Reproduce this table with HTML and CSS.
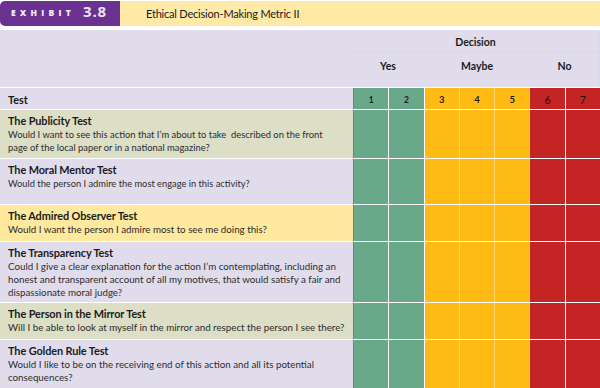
FILE: index.html
```html
<!DOCTYPE html>
<html lang="en">
<head>
<meta charset="utf-8">
<title>Exhibit 3.8</title>
<link rel="stylesheet" href="styles.css">
</head>
<body>
<div class="page">
  <header class="exhibit">
    <div class="badge"><span class="badge-word">EXHIBIT</span><span class="badge-num">3.8</span></div>
    <div class="exhibit-title">Ethical Decision-Making Metric II</div>
  </header>

  <div class="thead">
    <div class="thead-left"></div>
    <div class="thead-right">
      <div class="decision">Decision</div>
      <div class="choices">
        <div class="choice yes">Yes</div>
        <div class="choice maybe">Maybe</div>
        <div class="choice no">No</div>
      </div>
    </div>
  </div>

  <div class="row row-test">
    <div class="label lav"><div class="test-head">Test</div></div>
    <div class="cell g first"><span class="n small">1</span></div>
    <div class="cell g"><span class="n small">2</span></div>
    <div class="cell y"><span class="n">3</span></div>
    <div class="cell y"><span class="n">4</span></div>
    <div class="cell y"><span class="n">5</span></div>
    <div class="cell r"><span class="n big">6</span></div>
    <div class="cell r"><span class="n big">7</span></div>
  </div>

  <div class="row row-pub">
    <div class="label beige">
      <div class="t">The Publicity Test</div>
      <div class="d pub">Would I want to see this action that I’m about to take &nbsp;described on the front<br>page of the local paper or in a national magazine?</div>
    </div>
    <div class="cell g first"></div><div class="cell g"></div><div class="cell y"></div><div class="cell y"></div><div class="cell y"></div><div class="cell r"></div><div class="cell r"></div>
  </div>

  <div class="row row-moral">
    <div class="label lav">
      <div class="t">The Moral Mentor Test</div>
      <div class="d narrow">Would the person I admire the most engage in this activity?</div>
    </div>
    <div class="cell g first"></div><div class="cell g"></div><div class="cell y"></div><div class="cell y"></div><div class="cell y"></div><div class="cell r"></div><div class="cell r"></div>
  </div>

  <div class="row row-admired">
    <div class="label yel">
      <div class="t">The Admired Observer Test</div>
      <div class="d">Would I want the person I admire most to see me doing this?</div>
    </div>
    <div class="cell g first"></div><div class="cell g"></div><div class="cell y"></div><div class="cell y"></div><div class="cell y"></div><div class="cell r"></div><div class="cell r"></div>
  </div>

  <div class="row row-transp">
    <div class="label lav">
      <div class="t">The Transparency Test</div>
      <div class="d">Could I give a clear explanation for the action I’m contemplating, including an<br>honest and transparent account of all my motives, that would satisfy a fair and<br>dispassionate moral judge?</div>
    </div>
    <div class="cell g first"></div><div class="cell g"></div><div class="cell y"></div><div class="cell y"></div><div class="cell y"></div><div class="cell r"></div><div class="cell r"></div>
  </div>

  <div class="row row-mirror">
    <div class="label beige">
      <div class="t">The Person in the Mirror Test</div>
      <div class="d">Will I be able to look at myself in the mirror and respect the person I see there?</div>
    </div>
    <div class="cell g first"></div><div class="cell g"></div><div class="cell y"></div><div class="cell y"></div><div class="cell y"></div><div class="cell r"></div><div class="cell r"></div>
  </div>

  <div class="row row-golden">
    <div class="label lav">
      <div class="t">The Golden Rule Test</div>
      <div class="d">Would I like to be on the receiving end of this action and all its potential<br>consequences?</div>
    </div>
    <div class="cell g first"></div><div class="cell g"></div><div class="cell y"></div><div class="cell y"></div><div class="cell y"></div><div class="cell r"></div><div class="cell r"></div>
  </div>
</div>
</body>
</html>
```

FILE: styles.css
```css
* { box-sizing: border-box; }
html, body { margin: 0; padding: 0; background: #ffffff; }
body {
  width: 600px;
  height: 388px;
  overflow: hidden;
  font-family: Lato, "Open Sans", "Liberation Sans", sans-serif;
  color: #1b1b1b;
}
.page { width: 600px; }

/* exhibit header */
.exhibit {
  display: flex;
  height: 25px;
  margin-top: 1px;
}
.badge {
  width: 120px;
  background: #6a3190;
  border-radius: 5px 0 0 5px;
  display: flex;
  align-items: center;
  padding-left: 11px;
  padding-bottom: 2px;
}
.badge-word {
  font-family: "Open Sans", "Liberation Sans", sans-serif;
  font-weight: 800;
  font-size: 8.5px;
  letter-spacing: 4.3px;
  color: #f3ecfb;
}
.badge-num {
  font-family: "Open Sans", "Liberation Sans", sans-serif;
  font-weight: 700;
  font-size: 15px;
  letter-spacing: 0.8px;
  color: #ebe0f5;
  margin-left: 8px;
  margin-top: -3px;
}
.exhibit-title {
  flex: 1;
  background: #fee9a6;
  font-size: 11px;
  padding-left: 26px;
  display: flex;
  align-items: center;
  padding-bottom: 1px;
  letter-spacing: -0.2px;
}

/* table head */
.thead {
  margin-top: 4px;
  height: 57px;
  display: flex;
  background: #e1dcec;
  border-right: 1px solid #c3e2ee;
}
.thead-left { width: 352px; }
.thead-right {
  flex: 1;
  display: flex;
  flex-direction: column;
}
.decision {
  height: 22px;
  border-bottom: 1px solid #c3e2ee;
  text-align: center;
  font-weight: 700;
  font-size: 10.5px;
  padding-top: 6px;
}
.choices {
  flex: 1;
  display: flex;
  align-items: center;
  font-weight: 700;
  font-size: 10.5px;
  padding-bottom: 8px;
}
.choice { text-align: center; }
.choice.yes { width: 72px; }
.choice.maybe { width: 106px; }
.choice.no { flex: 1; }

/* rows */
.row {
  display: grid;
  grid-template-columns: 353px repeat(7, 1fr);
  border-top: 1px solid #ffffff;
}
.row-test { height: 22px; }
.row-pub { height: 49px; }
.row-moral { height: 46px; }
.row-admired { height: 37px; }
.row-transp { height: 61px; }
.row-mirror { height: 37px; }
.row-golden { height: 60px; }

.label { padding: 4px 8px 0 8px; }
.row-test .label { padding-top: 3px; }
.lav { background: #e1dcec; }
.beige { background: #dddec6; }
.yel { background: #fee99f; }

.test-head { font-weight: 700; font-size: 10.8px; line-height: 14px; padding-top: 2px; }
.t { font-weight: 700; font-size: 10.9px; line-height: 14px; letter-spacing: -0.1px; }
.d { font-size: 9.75px; line-height: 13px; color: #2c2c2c; white-space: nowrap; }
.d.pub { font-size: 9.4px; }
.d.narrow { font-size: 9.3px; }

.cell {
  border-left: 1px solid #ffffff;
  display: flex;
  justify-content: center;
  align-items: center;
}
.cell.first { border-left: 1px solid #4f9474; }
.cell.g { background: #6aa88a; }
.cell.y { background: #ffbb14; border-left-color: #ffd570; }
.cell.y + .cell.r { border-left-color: #f6b3a8; }
.cell.g + .cell.y { border-left-color: #ffffff; }
.cell.r { background: #c42424; border-left-color: #f0c8c8; }
.cell.r:last-child { border-left-color: #ffffff; }
.n { font-size: 9.5px; font-weight: 700; color: #1e1e1e; padding-top: 2px; }
.n.small { font-size: 8.5px; }
.n.big { font-size: 10.5px; font-weight: 400; color: #1a1010; }
```
